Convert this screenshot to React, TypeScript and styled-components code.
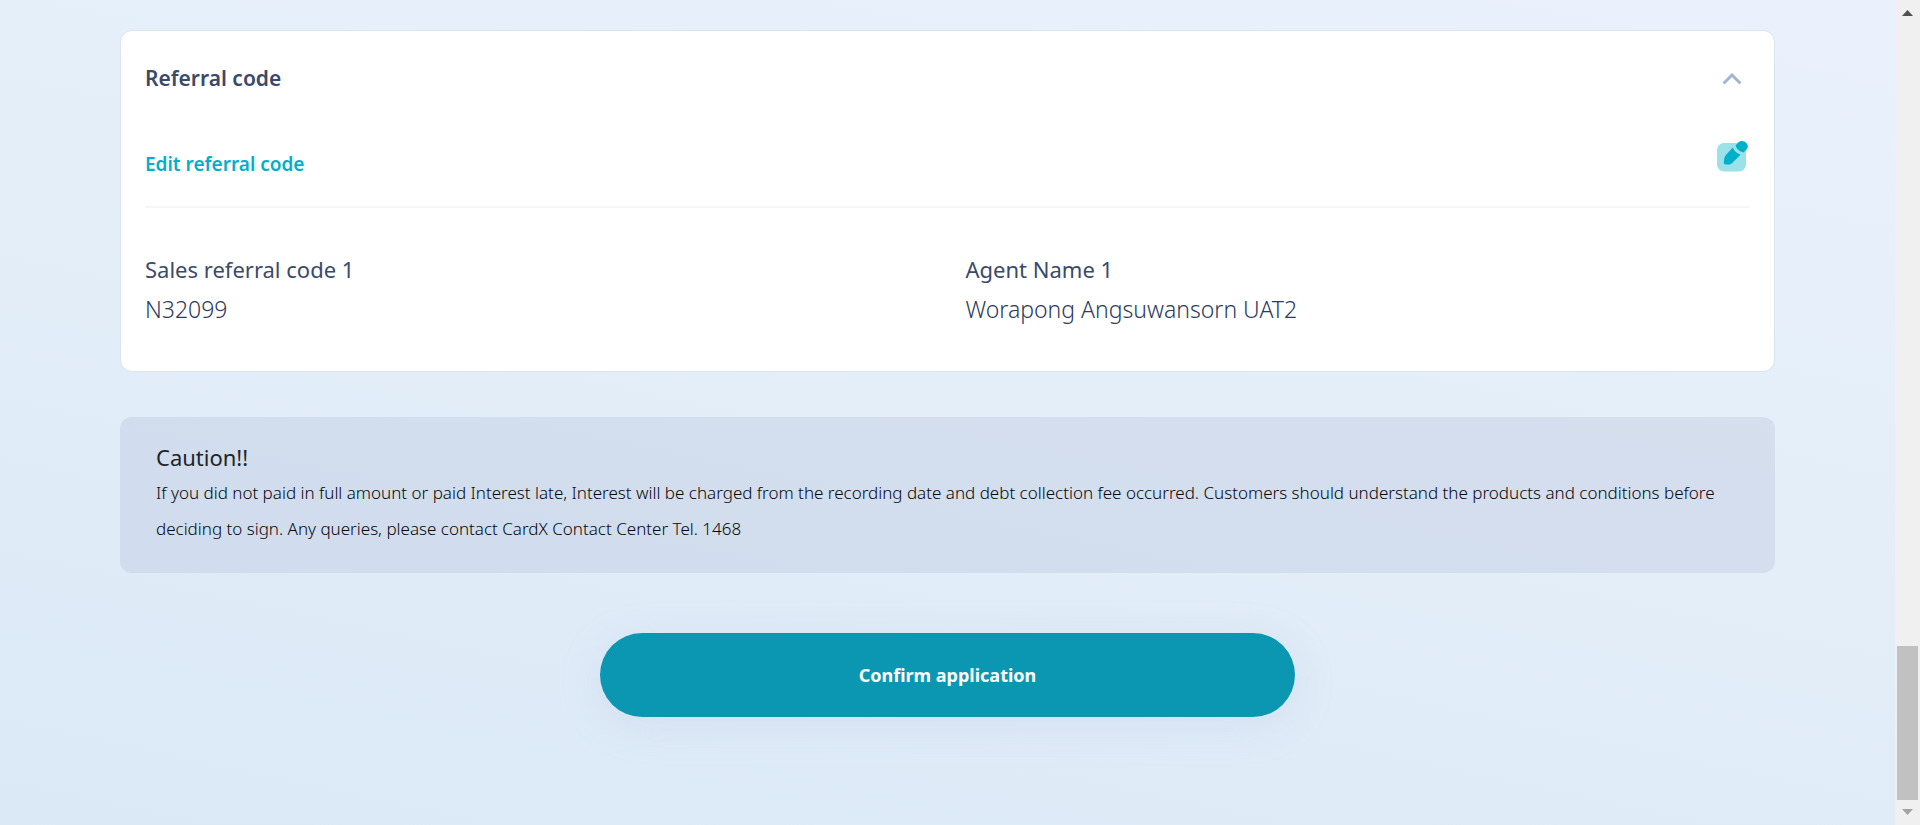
import React, { useState } from "react";
import styled, { createGlobalStyle } from "styled-components";

const GlobalStyle = createGlobalStyle`
  * { box-sizing: border-box; }
  body {
    margin: 0;
    font-family: "Noto Sans", "Open Sans", sans-serif;
    color: #3b4a6b;
  }
`;

const Shell = styled.div`
  display: flex;
  min-height: 100vh;
`;

const Page = styled.main`
  flex: 1;
  display: flex;
  flex-direction: column;
  align-items: stretch;
  padding: 30px 120px 48px;
  background: linear-gradient(192deg, #eaf1fc 0%, #e3eef8 48%, #dbe9f7 100%);
`;

const Card = styled.section`
  padding: 24px 24px 42px;
  border: 1px solid #dce4f0;
  border-radius: 12px;
  background: #fff;
`;

const CardHeader = styled.header`
  display: flex;
  align-items: center;
  justify-content: space-between;
  height: 46px;
`;

const CardTitle = styled.h2`
  margin: 0;
  font-size: 21px;
  font-weight: 600;
  line-height: 32px;
`;

const IconButton = styled.button`
  display: flex;
  padding: 0;
  border: 0;
  background: none;
  cursor: pointer;
`;

const EditRow = styled.div`
  display: flex;
  align-items: flex-start;
  justify-content: space-between;
  margin-top: 38px;
  padding-bottom: 28px;
  border-bottom: 2px solid #f3f6fb;
`;

const EditLink = styled.a`
  padding-top: 11px;
  color: #00b0ca;
  font-size: 19px;
  font-weight: 600;
  line-height: 28px;
  text-decoration: none;
`;

const Fields = styled.dl`
  display: grid;
  grid-template-columns: 1fr 1fr;
  column-gap: 36px;
  margin: 41px 0 0;
`;

const Field = styled.div`
  display: flex;
  flex-direction: column;
`;

const FieldLabel = styled.dt`
  font-size: 22px;
  line-height: 40px;
`;

const FieldValue = styled.dd`
  margin: 0;
  color: #2c3a5c;
  font-size: 23px;
  font-weight: 300;
  line-height: 40px;
`;

const Caution = styled.section`
  margin-top: 45px;
  padding: 22px 36px 26px;
  border-radius: 12px;
  background: rgba(174, 184, 212, 0.28);
  color: #212529;
`;

const CautionTitle = styled.h3`
  margin: 0;
  font-size: 22px;
  font-weight: 400;
  line-height: 36px;
`;

const CautionText = styled.p`
  margin: 0;
  color: #05080c;
  font-size: 17px;
  font-weight: 300;
  line-height: 36px;
`;

const ConfirmButton = styled.button`
  align-self: center;
  width: 42%;
  height: 84px;
  margin-top: 60px;
  border: 0;
  border-radius: 42px;
  background: #0b97b2;
  box-shadow: 0 8px 40px rgba(175, 180, 220, 0.22);
  color: #fff;
  font-family: inherit;
  font-size: 18px;
  font-weight: 700;
  cursor: pointer;
`;

const ScrollTrack = styled.div`
  display: flex;
  flex-direction: column;
  align-items: center;
  width: 25px;
  background: #f0f0f0;
`;

const ScrollArrow = styled.svg`
  flex: none;
  width: 25px;
  height: 25px;
`;

const ScrollSpace = styled.div`
  flex: 1;
`;

const ScrollThumb = styled.div`
  width: 21px;
  height: 154px;
  background: #c1c1c1;
`;

function Chevron({ open }: { open: boolean }) {
  return (
    <svg width="36" height="24" viewBox="0 0 36 24" fill="none" aria-hidden="true">
      <path
        d={open ? "M10.5 16.5 L18 9 L25.5 16.5" : "M10.5 9 L18 16.5 L25.5 9"}
        stroke="#a3b4d2"
        strokeWidth="3"
        strokeLinecap="round"
        strokeLinejoin="miter"
      />
    </svg>
  );
}

function EditIcon() {
  return (
    <svg width="34" height="34" viewBox="1 0 34 34" aria-hidden="true">
      <rect x="2" y="4" width="29" height="28.5" rx="7" fill="#9be1ea" />
      <path
        d="M17.8 8.6 C19.2 12.2 22 14.8 25.6 15.7 L17.2 23.9 Q15.8 25.4 13.8 25.5 L10.5 25.6 Q8.7 25.5 8.8 23.6 L9.2 20.1 Q9.4 17.8 10.9 16.1 Z"
        fill="#00b0ca"
      />
      <path
        d="M20.6 6.6 L22.8 3.9 C26 0 32.2 2.3 32.8 7.3 Q32.8 9.2 31.5 10.6 L28.5 13.4 C24.6 12.8 21.5 10.2 20.6 6.6 Z"
        fill="#00b0ca"
      />
    </svg>
  );
}

const fields = [
  { label: "Sales referral code 1", value: "N32099" },
  { label: "Agent Name 1", value: "Worapong Angsuwansorn UAT2" },
];

export default function App() {
  const [open, setOpen] = useState(true);

  return (
    <>
      <GlobalStyle />
      <Shell>
        <Page>
          <Card>
            <CardHeader>
              <CardTitle>Referral code</CardTitle>
              <IconButton
                type="button"
                aria-label="Toggle referral code"
                aria-expanded={open}
                onClick={() => setOpen(!open)}
              >
                <Chevron open={open} />
              </IconButton>
            </CardHeader>
            {open && (
              <>
                <EditRow>
                  <EditLink href="#edit">Edit referral code</EditLink>
                  <IconButton type="button" aria-label="Edit">
                    <EditIcon />
                  </IconButton>
                </EditRow>
                <Fields>
                  {fields.map((field) => (
                    <Field key={field.label}>
                      <FieldLabel>{field.label}</FieldLabel>
                      <FieldValue>{field.value}</FieldValue>
                    </Field>
                  ))}
                </Fields>
              </>
            )}
          </Card>
          <Caution>
            <CautionTitle>Caution!!</CautionTitle>
            <CautionText>
              If you did not paid in full amount or paid Interest late, Interest will be charged
              from the recording date and debt collection fee occurred. Customers should understand
              the products and conditions before deciding to sign. Any queries, please contact CardX
              Contact Center Tel. 1468
            </CautionText>
          </Caution>
          <ConfirmButton type="button">Confirm application</ConfirmButton>
        </Page>
        <ScrollTrack aria-hidden="true">
          <ScrollArrow viewBox="0 0 25 25">
            <path d="M7 16 L12.5 10 L18 16 Z" fill="#505050" />
          </ScrollArrow>
          <ScrollSpace />
          <ScrollThumb />
          <ScrollArrow viewBox="0 0 25 25">
            <path d="M7 9 L12.5 15 L18 9 Z" fill="#a3a3a3" />
          </ScrollArrow>
        </ScrollTrack>
      </Shell>
    </>
  );
}
